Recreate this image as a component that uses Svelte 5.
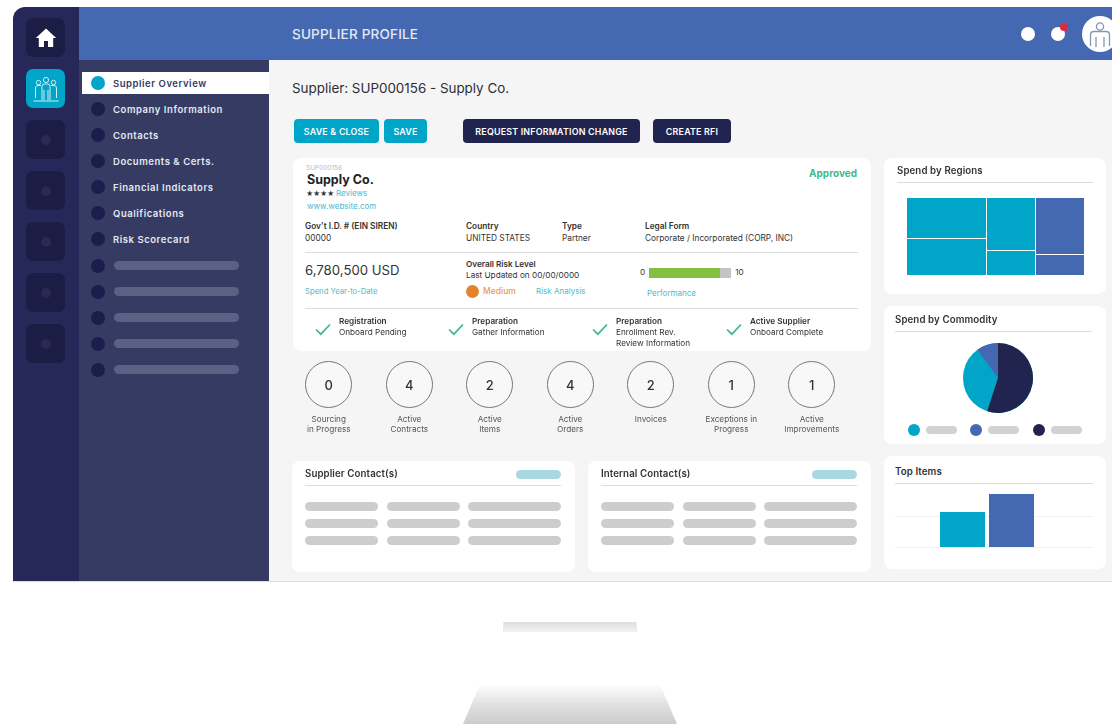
<script>
  const nav = ['Supplier Overview','Company Information','Contacts','Documents & Certs.','Financial Indicators','Qualifications','Risk Scorecard'];
  const stats = [['0','Sourcing','in Progress'],['4','Active','Contracts'],['2','Active','Items'],['4','Active','Orders'],['2','Invoices',''],['1','Exceptions in','Progress'],['1','Active','Improvements']];
  const steps = [['Registration',['Onboard Pending']],['Preparation',['Gather Information']],['Preparation',['Enrollment Rev.','Review Information']],['Active Supplier',['Onboard Complete']]];
  const contacts = ['Supplier Contact(s)','Internal Contact(s)'];
  const legend = ['#00a5c8','#4468b1','#20244f'];
</script>

<div class="page">
  <div class="monitor">
    <aside class="rail">
      <div class="tile">
        <svg width="22" height="22" viewBox="0 0 22 22"><path d="M11 1.5 0.8 11h3v9h5.2v-6h4v6h5.2v-9h3z" fill="#fff"/></svg>
      </div>
      <div class="tile active">
        <svg width="30" height="30" viewBox="0 0 30 30" fill="none" stroke="#cfeef5" stroke-width="1"><circle cx="15" cy="6" r="2.6"/><circle cx="7.5" cy="8.5" r="2.2"/><circle cx="22.5" cy="8.5" r="2.2"/><path d="M11 26V12.5q0-2.500 2.500-2.500h3q2.500 0 2.500 2.500V26M13 16v10M17 16v10M4.500 24V14q0-2.500 2.500-2.500h3M25.500 24V14q0-2.500-2.500-2.500h-3M2.500 27h25"/></svg>
      </div>
      {#each [1,2,3,4,5] as t (t)}
        <div class="tile"><span class="tile-dot"></span></div>
      {/each}
    </aside>
    <div class="shell">
      <header class="topbar">
        <span class="top-title">SUPPLIER PROFILE</span>
        <div class="top-actions">
          <span class="white-dot"></span>
          <span class="white-dot bell"><i></i></span>
          <span class="avatar">
            <svg width="26" height="28" viewBox="0 0 26 28" fill="none" stroke="#8595b8" stroke-width="1.300"><circle cx="13" cy="6.500" r="3.600"/><path d="M3.500 26V15q0-3.500 3.500-3.500h12q3.500 0 3.500 3.500v11M9 17v10M17 17v10"/></svg>
          </span>
        </div>
      </header>
      <div class="body">
        <nav class="side">
          {#each nav as n, i (n)}
            <div class="nav-item" class:on={i === 0}><span class="nav-dot"></span><span>{n}</span></div>
          {/each}
          {#each [1,2,3,4,5] as p (p)}
            <div class="nav-item"><span class="nav-dot"></span><span class="nav-pill"></span></div>
          {/each}
        </nav>
        <main class="content">
          <h1>Supplier: SUP000156 - Supply Co.</h1>
          <div class="buttons">
            <button class="teal">SAVE &amp; CLOSE</button>
            <button class="teal save">SAVE</button>
            <button class="navy req">REQUEST INFORMATION CHANGE</button>
            <button class="navy rfi">CREATE RFI</button>
          </div>
          <div class="columns">
            <div class="left">
              <section class="card profile">
                <div class="head">
                  <div>
                    <div class="sup-id">SUP000156</div>
                    <div class="sup-name">Supply Co.</div>
                    <div class="stars"><b>★★★★</b><span class="link">Reviews</span></div>
                    <div class="link web">www.website.com</div>
                  </div>
                  <div class="approved">Approved</div>
                </div>
                <div class="facts">
                  <div><b>Gov't I.D. # (EIN SIREN)</b><span>00000</span></div>
                  <div><b>Country</b><span>UNITED STATES</span></div>
                  <div><b>Type</b><span>Partner</span></div>
                  <div><b>Legal Form</b><span>Corporate / Incorporated (CORP, INC)</span></div>
                </div>
                <div class="metrics">
                  <div class="spend">
                    <div class="amount">6,780,500 USD</div>
                    <div class="link">Spend Year-to-Date</div>
                  </div>
                  <div class="risk">
                    <b>Overall Risk Level</b>
                    <span>Last Updated on 00/00/0000</span>
                    <div class="risk-row"><i></i><em>Medium</em><span class="link">Risk Analysis</span></div>
                  </div>
                  <div class="perf">
                    <div class="bar-row"><span>0</span><div class="bar"><div class="fill" style="width:86.500%"></div></div><span>10</span></div>
                    <div class="link">Performance</div>
                  </div>
                </div>
                <div class="steps">
                  {#each steps as s, i (i)}
                    <div class="step">
                      <svg width="16" height="13" viewBox="0 0 16 13" fill="none" stroke="#3fb88a" stroke-width="1.700"><path d="M1 6.500 5.800 11.200 15 1.500"/></svg>
                      <div><b>{s[0]}</b>{#each s[1] as l (l)}<span>{l}</span>{/each}</div>
                    </div>
                  {/each}
                </div>
              </section>
              <div class="stats">
                {#each stats as s, i (i)}
                  <div class="stat">
                    <div class="ring">{s[0]}</div>
                    <span>{s[1]}</span><span>{s[2]}</span>
                  </div>
                {/each}
              </div>
              <div class="contacts">
                {#each contacts as c (c)}
                  <section class="card contact">
                    <div class="contact-head"><h2>{c}</h2><span class="cta"></span></div>
                    <div class="rows">
                      {#each Array(9) as _, i (i)}<span class="pill"></span>{/each}
                    </div>
                  </section>
                {/each}
              </div>
            </div>
            <div class="right">
              <section class="card widget regions">
                <h2>Spend by Regions</h2>
                <div class="treemap">
                  <div class="tm c1"><i style="flex:41"></i><i style="flex:36"></i></div>
                  <div class="tm c2"><i style="flex:53"></i><i style="flex:24"></i></div>
                  <div class="tm c3"><i style="flex:57"></i><i style="flex:20"></i></div>
                </div>
              </section>
              <section class="card widget commodity">
                <h2>Spend by Commodity</h2>
                <svg class="pie" width="72" height="72" viewBox="-36 -36 72 72">
                  <circle r="35" fill="#00a5c8"/>
                  <path d="M0 0V-35A35 35 0 1 1 -10.800 33.300Z" fill="#20244f"/>
                  <path d="M0 0L-20.600 -28.300A35 35 0 0 1 0 -35Z" fill="#4468b1"/>
                </svg>
                <div class="legend">
                  {#each legend as c (c)}
                    <div class="leg"><span class="leg-dot" style="background:{c}"></span><span class="leg-pill"></span></div>
                  {/each}
                </div>
              </section>
              <section class="card widget items">
                <h2>Top Items</h2>
                <div class="chart">
                  <div class="b b1"></div>
                  <div class="b b2"></div>
                </div>
              </section>
            </div>
          </div>
        </main>
      </div>
    </div>
  </div>
  <div class="stand">
    <div class="neck"></div>
    <div class="base"></div>
  </div>
</div>

<style>
  :global(body) { margin: 0; background: #fff; }
  .page { width: 1112px; height: 728px; overflow: hidden; font-family: Inter, "Liberation Sans", sans-serif; color: #333; filter: blur(0.4px); }
  .monitor { margin: 7px 0 0 13px; width: 1099px; height: 574px; display: flex; border-radius: 12px 0 0 0; overflow: hidden; border-bottom: 1px solid #dcdcde; box-sizing: content-box; }
  .rail { width: 66px; flex: none; background: #26285a; padding-top: 11px; padding-left: 13px; box-sizing: border-box; display: flex; flex-direction: column; gap: 12px; }
  .tile { width: 39px; height: 39px; border-radius: 7px; background: #1b1d44; display: flex; align-items: center; justify-content: center; }
  .tile.active { background: #00a5c8; }
  .tile-dot { width: 10px; height: 10px; border-radius: 50%; background: #282a55; }
  .shell { flex: 1; display: flex; flex-direction: column; min-width: 0; }
  .topbar { height: 53px; flex: none; background: #4468b1; display: flex; align-items: center; padding-left: 213px; position: relative; }
  .top-title { color: #e3e9f5; font-size: 13.500px; font-weight: 500; letter-spacing: 0.2px; margin-top: 1px; }
  .top-actions { margin-left: auto; margin-right: -6px; display: flex; align-items: center; gap: 16px; }
  .white-dot { width: 14px; height: 14px; border-radius: 50%; background: #fff; position: relative; }
  .bell { margin-right: 2px; }
  .bell i { position: absolute; width: 8px; height: 8px; border-radius: 50%; background: #dd2a3f; top: -4px; right: -3px; }
  .avatar { width: 36px; height: 36px; border-radius: 50%; background: #fff; display: flex; align-items: center; justify-content: center; margin-left: -1px; }
  .body { flex: 1; display: flex; min-height: 0; }
  .side { width: 190px; flex: none; background: #353b63; padding: 12px 0 0 3px; box-sizing: border-box; }
  .nav-item { height: 22px; margin-bottom: 4.090px; display: flex; align-items: center; gap: 8px; padding-left: 9px; color: #e6e8f2; font-size: 9.500px; font-weight: 600; letter-spacing: 0.55px; }
  .nav-item.on { background: #fff; color: #353b63; }
  .nav-dot { width: 14px; height: 14px; border-radius: 50%; background: #1b1e4c; flex: none; }
  .on .nav-dot { background: #00a5c8; }
  .nav-pill { width: 125px; height: 9px; border-radius: 5px; background: #5b6085; margin-left: 1px; }
  .content { flex: 1; background: #f5f5f6; padding: 0 0 0 23px; min-width: 0; }
  h1 { margin: 19px 0 0; font-size: 13.400px; font-weight: 400; line-height: 18px; color: #2e2e33; }
  .buttons { display: flex; margin: 22px 0 0 2px; }
  button { height: 24px; border: 0; border-radius: 4px; font: 600 8.900px Inter, sans-serif; letter-spacing: 0.2px; padding: 0; }
  .teal { background: #00a5c8; color: #fff; width: 85px; }
  .save { width: 43px; margin-left: 5px; }
  .navy { background: #20244f; color: #fff; }
  .req { width: 177px; margin-left: 36px; }
  .rfi { width: 78px; margin-left: 13px; }
  .columns { display: flex; margin-top: 15px; gap: 13px; }
  .left { width: 579px; flex: none; }
  .right { width: 222px; flex: none; display: flex; flex-direction: column; gap: 12px; }
  .card { background: #fff; border-radius: 8px; }
  h2 { margin: 0; font-size: 9.700px; font-weight: 600; color: #333; letter-spacing: 0.1px; line-height: 12px; }
  b { font-weight: 600; }
  .profile { height: 193px; padding: 6px 13px 0 12px; box-sizing: border-box; margin-left: 1px; width: 578px; }
  .head { display: flex; justify-content: space-between; height: 56px; }
  .sup-id { font-size: 6.500px; color: #bbb; line-height: 9px; margin-left: 1px; }
  .sup-name { font-size: 12.500px; font-weight: 700; color: #222; line-height: 13px; margin-left: 2px; }
  .stars { font-size: 7px; line-height: 13px; margin-top: 1px; margin-left: 1px; display: flex; gap: 2px; }
  .stars b { color: #333; letter-spacing: -0.3px; }
  .link { color: #50b8cc; font-size: 8px; }
  .web { line-height: 13px; margin-left: 2px; }
  .approved { color: #3fb88a; font-size: 10px; font-weight: 700; margin-top: 3px; margin-right: 1px; }
  .facts { display: grid; grid-template-columns: 161px 96px 83px 1fr; font-size: 8.300px; line-height: 12px; height: 33px; box-sizing: border-box; border-bottom: 1px solid #dcdcdc; }
  .facts div { display: flex; flex-direction: column; }
  .metrics { display: grid; grid-template-columns: 161px 175px 1fr; height: 55px; border-bottom: 1px solid #dcdcdc; font-size: 8.200px; }
  .amount { font-size: 13.200px; line-height: 18px; margin-top: 8px; color: #333; }
  .spend .link { display: block; margin-top: 8px; font-size: 7.700px; }
  .risk { display: flex; flex-direction: column; line-height: 11px; padding-top: 6px; }
  .risk-row { display: flex; align-items: center; margin-top: 4px; }
  .risk-row i { width: 13px; height: 13px; border-radius: 50%; background: #e5832b; }
  .risk-row em { font-style: normal; color: #e89a55; font-size: 8.500px; font-weight: 500; margin-left: 4px; width: 53px; flex: none; }
  .perf { padding-top: 14px; margin-left: -1px; }
  .bar-row { display: flex; align-items: center; gap: 4px; line-height: 11px; }
  .bar { width: 82px; height: 10px; background: #c4c4c4; }
  .fill { height: 100%; background: #84c040; }
  .perf .link { display: block; margin: 10px 0 0 7px; }
  .steps { display: grid; grid-template-columns: 133px 144px 134px 1fr; padding: 7px 0 0 10px; }
  .step { display: flex; gap: 8px; align-items: flex-start; font-size: 8.200px; line-height: 11px; }
  .step svg { margin-top: 7px; flex: none; }
  .step div { display: flex; flex-direction: column; }
  .stats { display: grid; grid-template-columns: repeat(7, 80.500px); margin: 10px 0 0 -3.500px; height: 100px; }
  .stat { display: flex; flex-direction: column; align-items: center; font-size: 8.200px; line-height: 10px; color: #555; }
  .ring { width: 45px; height: 45px; border-radius: 50%; border: 1px solid #777; display: flex; align-items: center; justify-content: center; font-size: 13px; font-weight: 500; color: #333; margin-bottom: 6px; background: #f8f8f9; }
  .contacts { display: flex; gap: 13px; }
  .contact { width: 283px; height: 111px; padding: 7px 14px 0 13px; box-sizing: border-box; }
  .contact-head { display: flex; justify-content: space-between; align-items: flex-start; height: 17px; border-bottom: 1px solid #dcdcdc; }
  .cta { width: 45px; height: 9px; border-radius: 5px; background: #a8d8e0; margin-top: 2px; }
  .rows { display: grid; grid-template-columns: 73px 73px 1fr; column-gap: 8.500px; row-gap: 8px; margin-top: 16px; }
  .pill { height: 9px; border-radius: 5px; background: #cdcdcd; }
  .widget { padding: 7px 13px 0; box-sizing: border-box; }
  .widget h2 { border-bottom: 1px solid #dcdcdc; height: 17px; }
  .regions { height: 136px; }
  .treemap { display: grid; grid-template-columns: 79px 48px 48px; gap: 1px; margin: 15px 10px 0; height: 77px; width: 176px; }
  .tm { display: flex; flex-direction: column; gap: 1px; }
  .tm i { background: #00a5c8; display: block; }
  .c3 i { background: #4468b1; }
  .commodity { height: 138px; padding: 8px 14px 0 11px; }
  .pie { display: block; margin: 10px 0 0 67px; }
  .legend { display: grid; grid-template-columns: 62px 63px 1fr; margin: 10px 0 0 13px; }
  .leg { display: flex; align-items: center; gap: 6px; }
  .leg-dot { width: 12px; height: 12px; border-radius: 50%; }
  .leg-pill { width: 31px; height: 8px; border-radius: 4px; background: #d2d2d2; }
  .items { height: 113px; padding: 10px 13px 0 11px; }
  .chart { height: 64px; display: flex; align-items: flex-end; justify-content: center; gap: 4px; padding-right: 14px; box-sizing: border-box; background: linear-gradient(#f2f2f2, #f2f2f2) 0 32px / 100% 1px no-repeat, linear-gradient(#f2f2f2, #f2f2f2) 0 63px / 100% 1px no-repeat; }
  .b { width: 45px; margin-bottom: 1px; }
  .b1 { height: 35px; background: #00a5c8; }
  .b2 { height: 53px; background: #4468b1; }
  .stand { position: relative; display: flex; flex-direction: column; align-items: center; width: 214px; margin: 40px 0 0 463px; }
  .neck { width: 135px; height: 10px; background: linear-gradient(#dedede, #f2f2f2); clip-path: polygon(1px 0, 134px 0, 135px 100%, 0 100%); }
  .base { width: 214px; height: 50px; margin-top: 42px; background: linear-gradient(rgba(205,205,205,0) 20%, #e2e2e2 60%, #cccccc); clip-path: polygon(10% 0, 90% 0, 100% 100%, 0 100%); }
</style>
